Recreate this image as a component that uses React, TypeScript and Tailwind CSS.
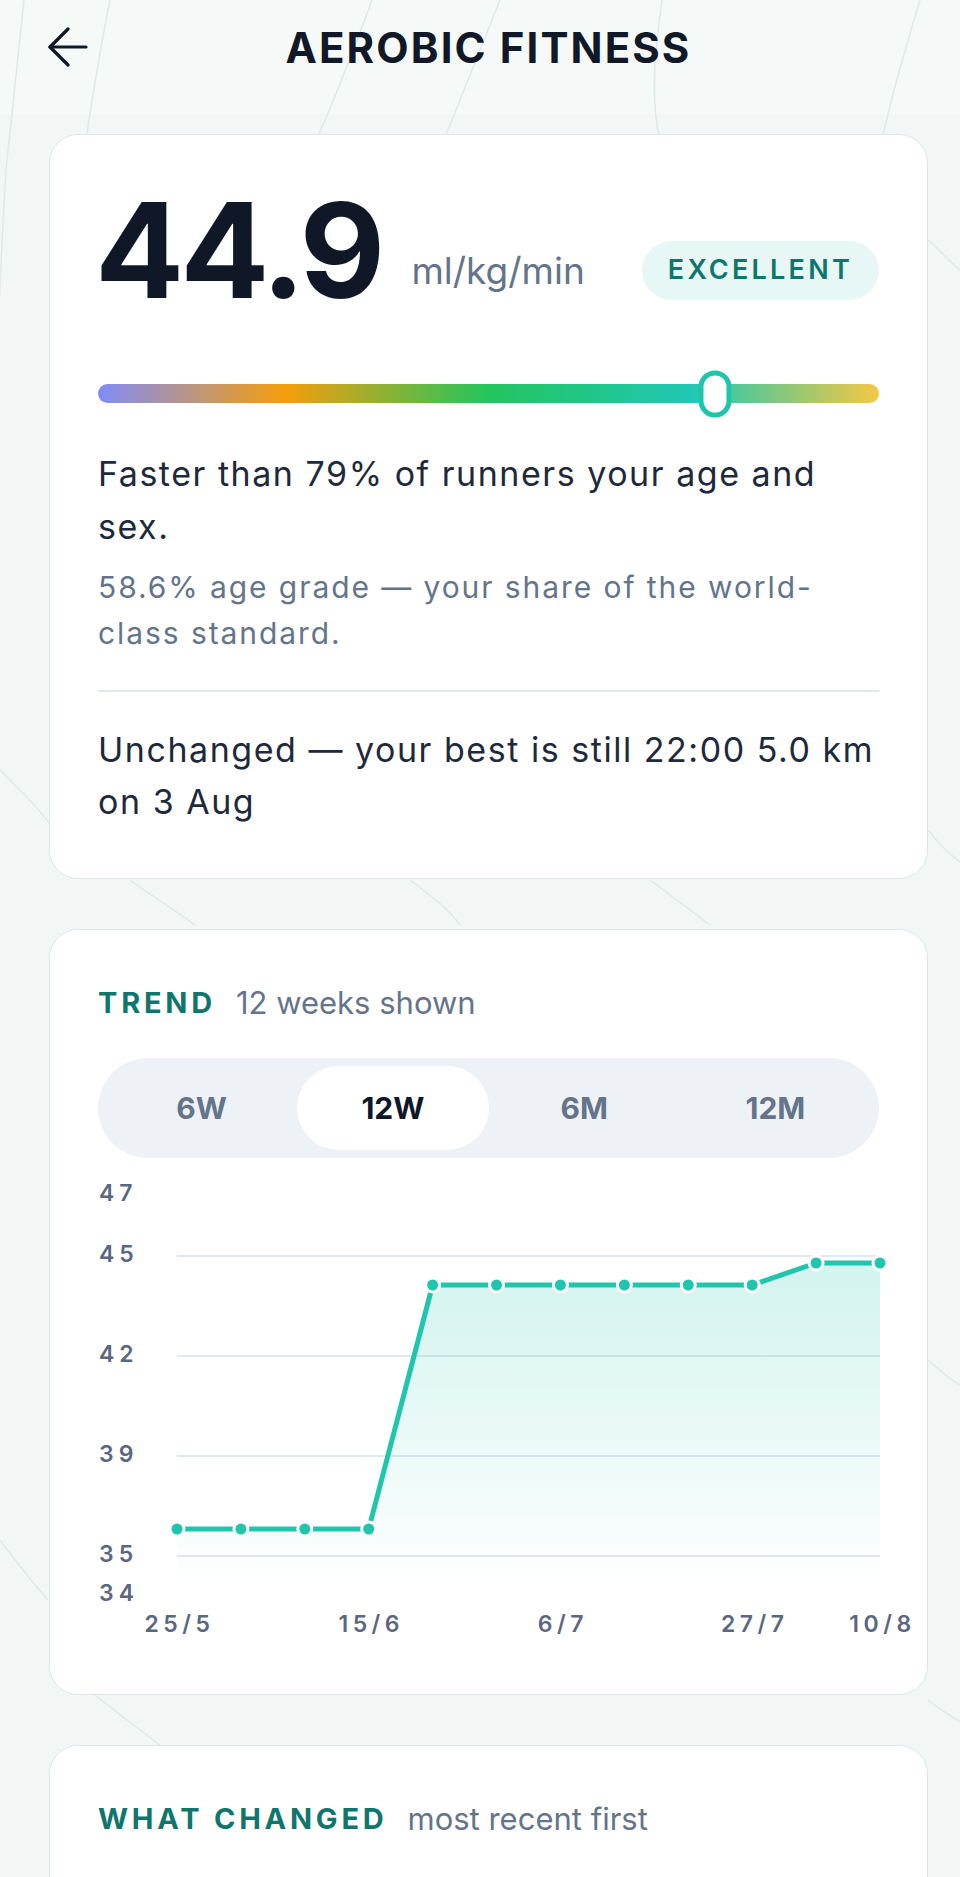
import React from "react";

const X0 = 79;
const STEP = (782 - 79) / 11;
const pointsY = [357, 357, 357, 357, 113, 113, 113, 113, 113, 113, 91, 91];

const yTicks = [
  { label: "47", y: 23, grid: false },
  { label: "45", y: 84, grid: true },
  { label: "42", y: 184, grid: true },
  { label: "39", y: 284, grid: true },
  { label: "35", y: 384, grid: true },
  { label: "34", y: 423, grid: false },
];

const xTicks = [
  { label: "25/5", i: 0 },
  { label: "15/6", i: 3 },
  { label: "6/7", i: 6 },
  { label: "27/7", i: 9 },
  { label: "10/8", i: 11 },
];

const ranges = ["6W", "12W", "6M", "12M"];

const Topo = () => (
  <svg
    className="pointer-events-none absolute left-0 top-0"
    width={960}
    height={1877}
    viewBox="0 0 960 1877"
    fill="none"
    stroke="#dfe9e7"
    strokeWidth={1.5}
  >
    <path d="M24 0 C18 60 12 110 6 170 C2 230 0 300 -4 360" />
    <path d="M110 0 C100 50 92 100 86 140" />
    <path d="M372 0 C350 60 330 110 312 150" />
    <path d="M500 0 C480 50 460 100 440 150" />
    <path d="M662 0 C655 50 650 100 660 140" />
    <path d="M920 0 C905 50 890 100 880 150" />
    <path d="M0 770 C30 800 50 820 60 840" />
    <path d="M130 880 C150 895 175 910 195 925" />
    <path d="M410 880 C430 895 450 910 460 925" />
    <path d="M650 880 C670 895 690 910 710 925" />
    <path d="M928 830 C940 845 950 855 960 862" />
    <path d="M928 240 C940 250 950 262 960 270" />
    <path d="M0 1540 C15 1560 30 1580 48 1600" />
    <path d="M928 1360 C940 1370 950 1380 960 1385" />
    <path d="M95 1695 C120 1715 140 1730 160 1745" />
    <path d="M928 1700 C940 1710 950 1715 960 1722" />
  </svg>
);

const BackArrow = () => (
  <svg width={40} height={40} viewBox="0 0 40 40" fill="none" stroke="#111827" strokeWidth={3.2} strokeLinecap="round" strokeLinejoin="round">
    <path d="M20 2 L2 20 L20 38" />
    <path d="M2 20 H38" />
  </svg>
);

const TrendChart = () => {
  const pts = pointsY.map((y, i) => [X0 + i * STEP, y]);
  const line = pts.map(([x, y], i) => `${i === 0 ? "M" : "L"}${x.toFixed(1)} ${y}`).join(" ");
  const area = `${line} L782 418 L${X0} 418 Z`;

  return (
    <svg className="mt-[14px] block overflow-visible" width={782} height={470} viewBox="0 0 782 470">
      <defs>
        <linearGradient id="trendFill" gradientUnits="userSpaceOnUse" x1="0" y1="91" x2="0" y2="418">
          <stop offset="0%" stopColor="#1fc5ad" stopOpacity={0.2} />
          <stop offset="100%" stopColor="#1fc5ad" stopOpacity={0} />
        </linearGradient>
      </defs>

      {yTicks.map((t) => (
        <g key={t.label}>
          {t.grid && <line x1={X0} x2={782} y1={t.y} y2={t.y} stroke="#e2e8f0" strokeWidth={2} />}
          <text
            x={1}
            y={t.y}
            dominantBaseline="middle"
            fontSize={23}
            fontWeight={600}
            letterSpacing={5}
            fill="#5b6780"
          >
            {t.label}
          </text>
        </g>
      ))}

      <path d={area} fill="url(#trendFill)" />
      <path d={line} fill="none" stroke="#1fc5ad" strokeWidth={5} strokeLinejoin="round" />
      {pts.map(([x, y], i) => (
        <circle key={i} cx={x} cy={y} r={7} fill="#1fc5ad" stroke="#ffffff" strokeWidth={3} />
      ))}

      {xTicks.map((t) => (
        <text
          key={t.label}
          x={X0 + t.i * STEP + 2.5}
          y={454}
          textAnchor="middle"
          dominantBaseline="middle"
          fontSize={23}
          fontWeight={600}
          letterSpacing={4.5}
          fill="#5b6780"
        >
          {t.label}
        </text>
      ))}
    </svg>
  );
};

const SectionTitle = ({ title, sub }: { title: string; sub: string }) => (
  <div className="flex h-[52px] items-center gap-[20px]">
    <h2 className="text-[29px] font-bold tracking-[0.13em] text-[#0f766e]">{title}</h2>
    <span className="text-[31px] text-[#64748b]">{sub}</span>
  </div>
);

export default function App() {
  return (
    <div className="relative min-h-screen overflow-hidden bg-[#f2f7f6] font-[Inter,sans-serif]">
      <div className="absolute left-0 top-0 h-[114px] w-full bg-[#f5faf9]" />
      <Topo />

      <div className="relative pl-[49px] pr-[32px]">
        {/* header */}
        <header className="grid h-[114px] grid-cols-[40px_1fr_40px] items-start">
          <button className="mt-[27px] -ml-[1px]">
            <BackArrow />
          </button>
          <h1 className="mt-[24px] text-center text-[42px] font-bold leading-[48px] tracking-[0.05em] text-[#111827]">
            AEROBIC FITNESS
          </h1>
          <div />
        </header>

        <div className="mt-[20px] flex flex-col gap-[50px] pb-[40px]">
          {/* score card */}
          <section className="rounded-[29px] border border-[#dfe5ec] bg-white px-[48px] pt-[49px] pb-[50px]">
            <div className="flex items-end">
              <span className="-ml-[3px] text-[132px] font-bold leading-none tracking-[-0.03em] text-[#101828]">44.9</span>
              <span className="mb-[25px] ml-[30px] text-[37px] leading-[40px] text-[#64748b]">ml/kg/min</span>
              <span className="mb-[16px] ml-auto flex h-[59px] items-center rounded-full bg-[#e7f7f5] px-[26px] text-[27px] font-semibold tracking-[0.12em] text-[#0f766e]">
                EXCELLENT
              </span>
            </div>

            <div className="relative mt-[68px] h-[19px] rounded-full bg-[linear-gradient(90deg,#818cf8_0%,#f59e0b_24%,#22c55e_50%,#1fc8b4_76%,#f5c842_100%)]">
              <div className="absolute left-[79%] top-1/2 h-[47px] w-[33px] -translate-x-1/2 -translate-y-1/2 rounded-full border-[5px] border-[#1fc4ac] bg-white" />
            </div>

            <p className="mt-[44px] text-[34px] leading-[53px] tracking-[0.045em] text-[#1e293b]">
              Faster than 79% of runners your age and sex.
            </p>
            <p className="mt-[11px] text-[30px] leading-[46px] tracking-[0.064em] text-[#64748b]">
              58.6% age grade — your share of the world-class standard.
            </p>
            <div className="mt-[34px] h-[2px] bg-[#e2e8f0]" />
            <p className="mt-[32px] text-[34px] leading-[52px] tracking-[0.045em] text-[#1e293b]">
              Unchanged — your best is still 22:00 5.0 km on 3 Aug
            </p>
          </section>

          {/* trend card */}
          <section className="rounded-[29px] border border-[#dfe5ec] bg-white px-[48px] pt-[47px] pb-[52px]">
            <SectionTitle title="TREND" sub="12 weeks shown" />
            <div className="mt-[29px] grid h-[100px] grid-cols-4 rounded-full bg-[#eef2f6] p-[8px]">
              {ranges.map((r) => (
                <button
                  key={r}
                  className={
                    r === "12W"
                      ? "rounded-full bg-white text-[30px] font-bold text-[#0f172a]"
                      : "rounded-full text-[30px] font-bold text-[#64748b]"
                  }
                >
                  {r}
                </button>
              ))}
            </div>
            <TrendChart />
          </section>

          {/* changes card */}
          <section className="min-h-[400px] rounded-[29px] border border-[#dfe5ec] bg-white px-[48px] pt-[47px] pb-[48px]">
            <SectionTitle title="WHAT CHANGED" sub="most recent first" />
          </section>
        </div>
      </div>
    </div>
  );
}
